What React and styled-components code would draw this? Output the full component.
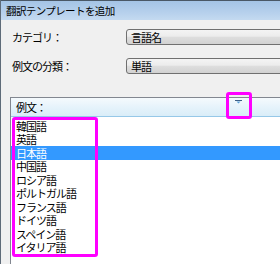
import React from 'react';
import styled, { createGlobalStyle } from 'styled-components';

const GlobalStyle = createGlobalStyle`
  html, body {
    margin: 0;
    padding: 0;
    overflow: hidden;
    background: #f0f0f0;
  }
  * {
    box-sizing: border-box;
  }
`;

const languages = [
  '韓国語', '英語', '日本語', '中国語', 'ロシア語',
  'ポルトガル語', 'フランス語', 'ドイツ語', 'スペイン語', 'イタリア語',
];

const Window = styled.div`
  position: relative;
  width: 280px;
  height: 264px;
  overflow: hidden;
  display: flex;
  flex-direction: column;
  background: #f0f0f0;
  border-left: 1px solid #5e6b78;
  font-family: "Noto Sans CJK JP", "Noto Sans", sans-serif;
  color: #000;
  line-height: 13px;
`;

const TitleBar = styled.div`
  height: 20px;
  flex: none;
  display: flex;
  align-items: center;
  padding-left: 5px;
  border-top: 1px solid #4a5866;
  background: linear-gradient(#a4c4e6, #b6d0ec 60%, #c4daf0);
  font-size: 10.5px;
  letter-spacing: -0.6px;
`;

const Form = styled.div`
  display: flex;
  flex-direction: column;
  gap: 13px;
  padding: 9px 0 0 11px;
`;

const Row = styled.div`
  display: flex;
  align-items: center;
  height: 16px;
`;

const Label = styled.div`
  width: 114px;
  flex: none;
  font-size: 11px;
  letter-spacing: -1px;
`;

const Combo = styled.div`
  width: 180px;
  height: 16px;
  flex: none;
  display: flex;
  align-items: center;
  padding-left: 4px;
  border: 1px solid #707070;
  border-radius: 3px;
  background: linear-gradient(#f4f4f4 0%, #ececec 45%, #dedede 50%, #d2d2d2 100%);
  font-size: 11px;
  letter-spacing: -1px;
`;

const ListView = styled.div`
  flex: 1;
  margin: 23px 0 0 9px;
  width: 300px;
  background: #fff;
  border-left: 1px solid #828790;
  border-top: 1px solid #828790;
`;

const Header = styled.div`
  position: relative;
  height: 19px;
  display: flex;
  align-items: center;
  padding-left: 5px;
  background: linear-gradient(#f5fafd, #e6f3fb 50%, #d9edf8);
  border-bottom: 1px solid #96c8e8;
  font-size: 11px;
  letter-spacing: -1px;
`;

const SortArrow = styled.svg`
  position: absolute;
  left: 224px;
  top: 2px;
`;

const Items = styled.div`
  padding-top: 2px;
`;

const Item = styled.div`
  height: 13.5px;
  display: flex;
  align-items: center;
  padding-left: 5px;
  font-size: 11px;
  line-height: 12px;
  letter-spacing: -1px;
  background: ${(p) => (p.$selected ? '#3399ff' : 'transparent')};
  color: ${(p) => (p.$selected ? '#fff' : '#000')};
`;

const Highlight = styled.div`
  position: absolute;
  border: 3px solid #ff00ff;
  border-radius: 3px;
`;

export default function App() {
  return (
    <>
      <GlobalStyle />
      <Window>
        <TitleBar>翻訳テンプレートを追加</TitleBar>
        <Form>
          <Row>
            <Label>カテゴリ：</Label>
            <Combo>言語名</Combo>
          </Row>
          <Row>
            <Label>例文の分類：</Label>
            <Combo>単語</Combo>
          </Row>
        </Form>
        <ListView>
          <Header>
            例文：
            <SortArrow width="7" height="4" viewBox="0 0 7 4">
              <path d="M0 0.5 H7" stroke="#3c5f86" strokeWidth="1" />
              <path d="M1.5 1.5 H5.5 L3.5 3.5 Z" fill="#5aa0d8" />
            </SortArrow>
          </Header>
          <Items>
            {languages.map((lang) => (
              <Item key={lang} $selected={lang === '日本語'}>{lang}</Item>
            ))}
          </Items>
        </ListView>
        <Highlight style={{ left: 11, top: 117, width: 86, height: 140 }} />
        <Highlight style={{ left: 225, top: 92, width: 26, height: 27 }} />
      </Window>
    </>
  );
}
